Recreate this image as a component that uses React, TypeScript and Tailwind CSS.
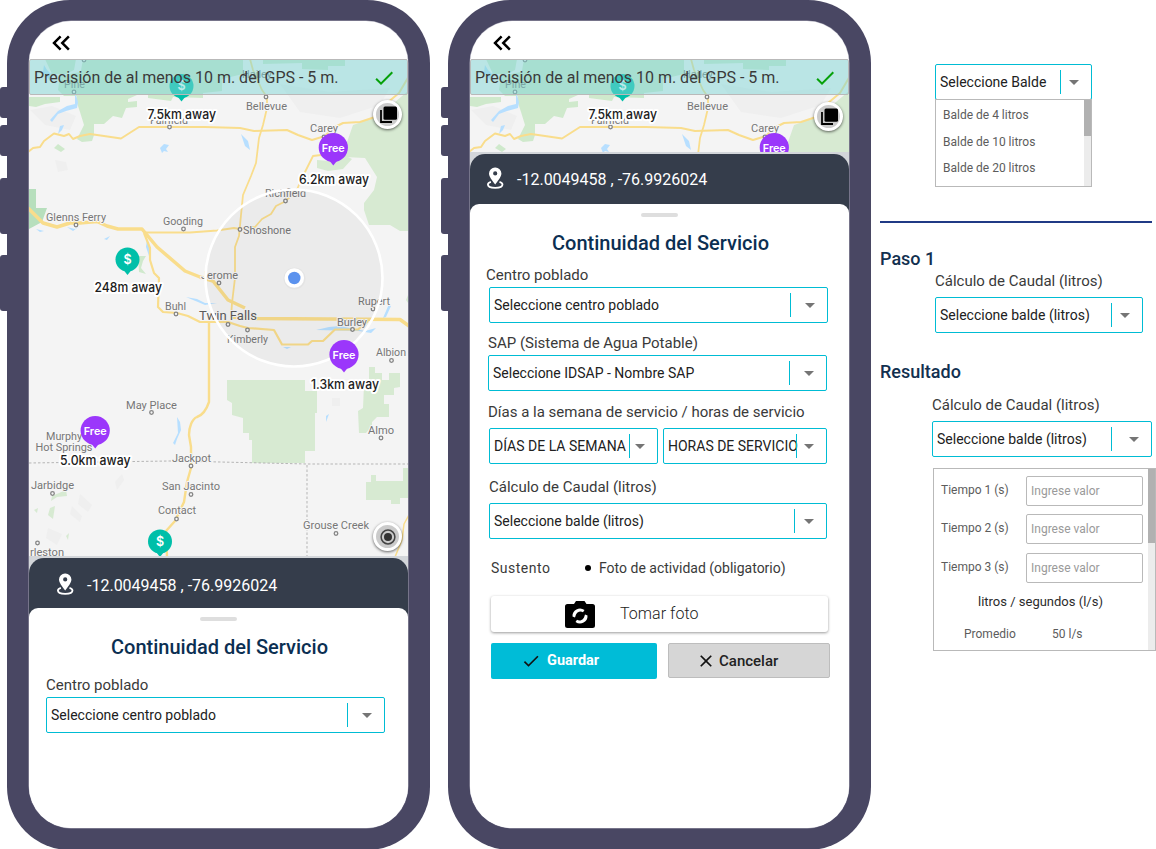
import React from "react";
import { MdKeyboardDoubleArrowLeft, MdCheck, MdClose } from "react-icons/md";

const towns: [string, number, number, number, number?][] = [
  ["Pine", 64, 88, 21],
  ["Hailey", 242, 78, 30],
  ["Bellevue", 246, 110, 41],
  ["Fairfield", 150, 124, 38],
  ["Carey", 310, 132, 28],
  ["Richfield", 265, 197, 41],
  ["Glenns Ferry", 46, 220.5, 60],
  ["Gooding", 163, 224.5, 40],
  ["Shoshone", 243, 234, 48],
  ["Jerome", 201, 278.5, 37],
  ["Buhl", 165, 310, 21],
  ["Twin Falls", 199, 319.5, 58, 13],
  ["Rupert", 358, 305, 32],
  ["Burley", 337, 325.5, 30],
  ["Kimberly", 227, 342.5, 41],
  ["Albion", 376, 356, 30],
  ["May Place", 126, 408.5, 51],
  ["Murphy", 46, 439.5, 36],
  ["Hot Springs", 35.5, 450.5, 57],
  ["Almo", 368, 433.5, 26],
  ["Jackpot", 172, 461.5, 39],
  ["Jarbidge", 31, 489, 43],
  ["San Jacinto", 162, 490, 58],
  ["Contact", 158, 514, 38],
  ["Grouse Creek", 303, 528.5, 66],
  ["rleston", 30, 555.5, 34],
];

const distances: [string, number, number, number][] = [
  ["7.5km away", 147.5, 118.5, 68.5],
  ["6.2km away", 299, 183.5, 70],
  ["248m away", 94.5, 291.5, 67.5],
  ["1.3km away", 311, 389, 68],
  ["5.0km away", 60, 465, 70.5],
];

const pins: [number, number, boolean][] = [
  [181.5, 86, false],
  [127.5, 259.5, false],
  [160, 541.5, false],
  [333.3, 147.5, true],
  [344, 354.5, true],
  [95.2, 430.5, true],
];

const dots: [number, number][] = [
  [84, 60], [74, 92], [266, 97], [169.5, 127], [324, 137], [285.5, 201], [76, 225], [183.5, 229], [240, 229.5],
  [219, 283], [176, 314], [228, 324.5], [373, 309], [352.5, 329.5], [247.5, 330], [391.5, 360.5],
  [151.5, 412.5], [381, 438], [191, 466], [52.5, 493.5], [191, 494.5], [176.5, 519], [336, 533.5], [37.5, 543],
];

const roads: [string, number][] = [
  ["M28 152L33 148L40 147L44 141L54 133.500L64 136L69 134L73 139L80 136L90 134L104 136L121 138.500L139 127H205L240 128L254 131L287 130L298 135L312 140L325 136L333 128L343 123L360 122L375 117L387 103L399 93L409 76", 2],
  ["M250 59L253 70L262 90L267 97V108L263 125L259 138L256 163L251 176L243 195L241 215L239 236L235 247V278L232 303L231 318", 1.8],
  ["M321 155L313 156L306 170L301 180L296 192L284 202L276 206L271 214L262 219L255 227L240 229", 1.8],
  ["M28 208L43 223L57 227L70 223L80 223L97 221.500L107 226L118 229H142L157 247L185 271L200 277L213 281L228 300L245 308", 3.5],
  ["M145 232.500H190L217 230.500L234 228L240 229", 2],
  ["M144 233L150 248V260L154 273L159 278L158 307L163 312L177 313L188 316L200 322H228L240 326L248 328L274 330L282 344.500H308L312 341L323 341L335 329.500H358L368 321", 2.2],
  ["M230 317L257 318.500L400 319.500L409 326", 3.5],
  ["M209 322V402C207 408 203 415 197 417C192 419 189 427 189 435L191 447L191 468L187 482L184 502L175 521L166 531L167 557", 2.4],
  ["M409 515L404 524L402 540L395 557", 1.5],
];

function Pin({ x, y, free }: { x: number; y: number; free: boolean }) {
  const r = free ? 14.6 : 12;
  return (
    <g>
      <circle cx={x} cy={y} r={r} fill={free ? "#9b37fb" : "#00bfa9"} />
      <path d={`M${x - 4} ${y + r - 1.5}L${x} ${y + r + 3.5}L${x + 4} ${y + r - 1.5}Z`} fill={free ? "#9b37fb" : "#00bfa9"} />
      <text x={x} y={y + 4} textAnchor="middle" fill="#fff" fontFamily="Inter, sans-serif" fontWeight="600" fontSize={free ? 10.8 : 12.5}>
        {free ? "Free" : "$"}
      </text>
    </g>
  );
}

function MapView({ height }: { height: number }) {
  const bottom = 59 + height;
  return (
    <svg className="block w-[379px]" height={height} viewBox={`29 59 379 ${height}`}>
      <rect x="29" y="59" width="379" height="498" fill="#f4f4f4" />
      <g fill="#efefef">
        <path d="M30 110L52 106L76 116L70 130L45 125Z" />
        <path d="M280 84L330 92L390 88L380 105L340 118L300 112Z" />
        <path d="M55 160L66 162L68 170L58 172Z" />
        <path d="M332 398H340V406H332Z" />
        <path d="M80 494L92 505L88 512L78 504ZM72 506L82 516L80 522L70 514ZM48 528L62 534L57 545L46 538ZM115 482L122 474L124 480L117 490Z" />
      </g>
      <g fill="#cfe9cc">
        <path d="M45 59H76L74 70L66 74H52Z" />
        <path d="M29 97H60V102L45 104L36 107L29 106Z" />
        <path d="M83 59H243V74L222 79V91L203 93V98L173 97L171 101L148 98V95H137L128 99V102L137 101V107L126 108L122 118L113 116L104 124H94V135L92 141L82 142L77 139L84 125L80 112L76 100Z" />
        <path d="M60 76L80 72L84 96H64L58 90Z" />
        <path d="M263 59H345V66L328 66V70L302 69V63L263 64Z" />
        <path d="M54 148L58 144L65 149L61 152Z" />
        <path d="M29 189H36V208H47L42 222L29 229Z" fill="#b7dfbd" />
        <path d="M138 256L146 256L143 261L141 268L146 274L139 272Z" />
      </g>
      <g fill="#d7ead2">
        <path d="M408 91L395 102L376 117L353 125L346 145L344 157L365 158L377 177L374 190L364 203V210L369 225H390L400 231H408Z" />
        <path d="M317 160L329 161L342 154L352 159L343 169L328 171L317 168Z" />
        <path d="M408 295V303L406 300Z" />
        <path d="M227 380H305V391H317V413H315V451H305V463H252V440H249V433H243V418L232 415V403L227 400Z" />
        <path d="M369 367H375V373H382V380H389V373H400V387L394 388V395H384V404H389V417H377L372 422V426L366 433H359L358 411L363 408L364 385L369 380Z" />
        <path d="M366 482H371V475H376V481H403V468H408V498H400V504H391V500H366Z" />
        <path d="M52 496L66 490L67 496L57 497L51 501ZM50 508L55 506L53 519L48 515ZM34 510L38 508L37 513ZM66 536L69 533L68 540Z" />
      </g>
      <g fill="#b7dfff">
        <path d="M75 92L78 102L77 108L66 111L58 114L52 122L50 120L58 111L67 106L75 104ZM60 126L64 125L62 130L58 134Z" />
        <path d="M44 65L47 70L51 74L53 70L50 81L43 72Z" />
        <path d="M160 148L164 144L169 145L166 149L168 152L164 151L162 153ZM241 134L248 141L250 150L245 146Z" />
        <path d="M36 229L44 231L40 232ZM67 227L75 229L80 226L73 231ZM104 239L110 236L107 240Z" />
        <path d="M177 417L180 422L181 430L177 439L175 445L173 443L178 433ZM326 416L329 414L326 422Z" />
        <path d="M186 297L197 299L205 303L217 303L205 305ZM316 330L329 327L340 326L365 331L376 328L371 333L359 331ZM283 347L291 347L287 349ZM389 304L391 306L386 317L383 318Z" />
        <path d="M147 239L150 250L149 256L146 247Z" />
      </g>
      <path d="M29 463L170 461L220 462L307 464L408 464M307 465V557" fill="none" stroke="#b5b5b5" strokeWidth="1" strokeDasharray="2.500 2" />
      <g fill="none" strokeLinejoin="round">
        {roads.map(([d, w]) => (
          <path key={d} d={d} stroke="#f9dd8c" strokeWidth={w} />
        ))}
      </g>
      <g fill="#f5f5f5" stroke="#858585" strokeWidth="1.300">
        {dots.map(([x, y]) => (
          <circle key={`${x}-${y}`} cx={x} cy={y} r="1.8" />
        ))}
      </g>
      <g fontFamily="Roboto, sans-serif" stroke="#f6f6f6" strokeWidth="2" strokeLinejoin="round" paintOrder="stroke">
        {towns
          .filter(([, , y]) => y < bottom)
          .map(([name, x, y, w, size]) => (
            <text
              key={name}
              x={x}
              y={y}
              textLength={w}
              lengthAdjust="spacingAndGlyphs"
              fontSize={size ?? 11.4}
              fill={size ? "#5c5c5c" : "#777"}
              stroke={y < 95 ? "none" : "#f6f6f6"}
            >
              {name}
            </text>
          ))}
      </g>
      <circle cx="294" cy="278" r="88.500" fill="#000" fillOpacity=".035" stroke="#fff" strokeWidth="2.600" />
      <circle cx="294.500" cy="278.500" r="11" fill="#e4e4e4" />
      <circle cx="294.300" cy="278" r="9.800" fill="#fff" />
      <circle cx="294.300" cy="278" r="6.200" fill="#5b92ee" />
      {pins
        .filter(([, y]) => y < bottom)
        .map(([x, y, free]) => (
          <Pin key={`${x}-${y}`} x={x} y={y} free={free} />
        ))}
      <g fontFamily="Inter, sans-serif" fontWeight="500" fontSize="13" fill="#1c1c1c" stroke="#fff" strokeWidth="4" strokeLinejoin="round" paintOrder="stroke">
        {distances
          .filter(([, , y]) => y < bottom)
          .map(([text, x, y, w]) => (
            <text key={text} x={x} y={y} textLength={w} lengthAdjust="spacingAndGlyphs">
              {text}
            </text>
          ))}
      </g>
    </svg>
  );
}

function PinBase() {
  return (
    <svg className="h-[22px] w-[17px] shrink-0" viewBox="0 0 17 22" fill="none">
      <path fillRule="evenodd" fill="#fff" d="M8.200 0.500A6 6 0 0 0 2 6.500C2 9.600 5.200 13.500 8.200 17.400C11.200 13.500 14.400 9.600 14.400 6.500A6 6 0 0 0 8.200 0.500ZM8.200 4.300A2.100 2.100 0 1 1 8.200 8.500A2.100 2.100 0 1 1 8.200 4.300Z" />
      <path stroke="#fff" strokeWidth="1.800" d="M3.900 14.800C2 15.400 0.900 16.400 0.900 17.500C0.900 19.500 4 20.800 8.200 20.800S15.500 19.500 15.500 17.500C15.500 16.400 14.400 15.400 12.500 14.800" />
    </svg>
  );
}

function Label({ className = "", children }: { className?: string; children: React.ReactNode }) {
  return <div className={`whitespace-nowrap text-[15px] leading-5 text-[#3a3a3a] ${className}`}>{children}</div>;
}

function Select({ text, className, tail = "w-[37px]" }: { text: string; className: string; tail?: string }) {
  return (
    <div className={`flex h-9 shrink-0 items-center rounded-[2px] border border-[#00bcd4] bg-white pl-1 ${className}`}>
      <span className="min-w-0 flex-1 whitespace-nowrap text-[14px] text-[#212121]">{text}</span>
      <span className={`flex h-6 shrink-0 items-center justify-end border-l border-[#00bcd4] pr-3 ${tail}`}>
        <svg className="h-[5px] w-[10px] shrink-0" viewBox="0 0 10 5">
          <path d="M0 0H10L5 5Z" fill="#757575" />
        </svg>
      </span>
    </div>
  );
}

function RoundButton({ className, children }: { className: string; children: React.ReactNode }) {
  return (
    <div className={`absolute flex size-[29px] items-center justify-center rounded-full border-[3.5px] border-white bg-[#cbcbcb] shadow-[0_1px_3px_rgba(0,0,0,0.6)] ${className}`}>
      {children}
    </div>
  );
}

interface PhoneProps {
  mapHeight: number;
  layersClass: string;
  barClass: string;
  locate?: boolean;
  children: React.ReactNode;
}

function Phone({ mapHeight, layersClass, barClass, locate = false, children }: PhoneProps) {
  return (
    <div className="relative h-[850px] w-[423px] shrink-0 rounded-[63px] bg-[#494763] px-[22px] pt-[21px]">
      <div className="absolute -left-[7px] top-[87px] flex w-[8px] flex-col">
        <div className="h-[31px] rounded-l-[3px] bg-[#494763]" />
        <div className="mt-[7px] h-[31px] rounded-l-[3px] bg-[#494763]" />
        <div className="mt-[22px] h-[56px] rounded-l-[3px] bg-[#494763]" />
        <div className="mt-[21px] h-[56px] rounded-l-[3px] bg-[#494763]" />
      </div>
      <div className="flex h-[807px] w-[379px] flex-col overflow-hidden rounded-[42px] bg-white shadow-[0_0_0_0.5px_#a3a2b2]">
        <div className="flex h-[38px] shrink-0 items-center pl-[17px] pt-[6px]">
          <MdKeyboardDoubleArrowLeft size={30} color="#000" className="shrink-0" />
        </div>
        <div className="relative shrink-0">
          <MapView height={mapHeight} />
          <div className="absolute inset-x-0 top-0 flex h-9 items-center justify-between rounded-[2px] border border-[#b9b9b9] bg-[#7fd6d6]/50 pl-1 pr-[11px] pt-px">
            <span className="whitespace-nowrap text-[16px] text-[#3a3a3a]">Precisión de al menos 10 m. del GPS - 5 m.</span>
            <MdCheck size={24} color="#07a10b" />
          </div>
          <RoundButton className={layersClass}>
            <svg className="ml-px h-[17px] w-[17px] shrink-0" viewBox="0 0 17 17">
              <path d="M1 4V16H12" fill="none" stroke="#000" strokeWidth="1.800" />
              <rect x="3.500" y="0.500" width="13.500" height="13.300" rx="1.500" />
            </svg>
          </RoundButton>
          {locate && (
            <RoundButton className="left-[344px] top-[463px]">
              <svg className="h-4 w-4 shrink-0" viewBox="0 0 16 16">
                <circle cx="8" cy="8" r="6.900" fill="none" stroke="#444" strokeWidth="1.500" />
                <circle cx="8" cy="8" r="4" fill="#333" />
              </svg>
            </RoundButton>
          )}
        </div>
        <div className="shrink-0 bg-[#d3d6da] pt-[2px]">
          <div className={`flex h-[60px] items-start rounded-t-[15px] bg-[#353d4b] ${barClass}`}>
            <PinBase />
            <span className="ml-[13px] whitespace-nowrap text-[16px] leading-[25px] text-white">-12.0049458 , -76.9926024</span>
          </div>
        </div>
        <div className="-mt-[10px] flex flex-1 flex-col rounded-t-[9px] bg-white">
          <div className="mx-auto mt-[9px] h-[4px] w-[37px] shrink-0 rounded-full bg-[#dedede]" />
          <h1 className="mt-[10px] pl-[2px] text-center text-[20px] font-medium leading-8 text-[#0b2f52]">Continuidad del Servicio</h1>
          {children}
        </div>
      </div>
    </div>
  );
}

function TimeRow({ label, className }: { label: string; className: string }) {
  return (
    <div className={`flex h-[30px] shrink-0 items-center pl-[7px] text-[12px] text-[#5c5c5c] ${className}`}>
      <span className="-mt-[2px] w-[85px]">{label}</span>
      <span className="flex h-[30px] w-[117px] items-center rounded-[2px] border border-[#b9b9b9] pl-1 text-[#9a9a9a]">Ingrese valor</span>
    </div>
  );
}

export default function App() {
  return (
    <div className="flex h-[849px] w-[1156px] overflow-hidden bg-white pl-[7px] font-[Roboto,sans-serif]">
      <Phone mapHeight={497} layersClass="left-[344px] top-[41px]" barClass="pl-[28px] pt-[15px]" locate>
        <div className="pl-[17px]">
          <Label className="mt-[12px]">Centro poblado</Label>
          <Select className="mt-[2px] w-[339px]" text="Seleccione centro poblado" />
        </div>
      </Phone>
      <div className="w-[18px] shrink-0" />
      <Phone mapHeight={93} layersClass="left-[344px] top-[43px]" barClass="pl-[17px] pt-[13px]">
        <div className="flex flex-col pl-[18px]">
          <Label className="-ml-[2px] mt-[6px]">Centro poblado</Label>
          <Select className="ml-[1px] mt-[2px] w-[339px]" text="Seleccione centro poblado" />
          <Label className="mt-[10px]">SAP (Sistema de Agua Potable)</Label>
          <Select className="mt-[2px] w-[339px]" text="Seleccione IDSAP - Nombre SAP" />
          <Label className="mt-[11px]">Días a la semana de servicio / horas de servicio</Label>
          <div className="ml-[1px] mt-[6px] flex gap-[5px]">
            <Select className="w-[169px]" text="DÍAS DE LA SEMANA" tail="w-[28px]" />
            <Select className="w-[164px]" text="HORAS DE SERVICIO" tail="w-[30px]" />
          </div>
          <Label className="ml-[1px] mt-[13px]">Cálculo de Caudal (litros)</Label>
          <Select className="ml-[1px] mt-[6px] w-[338px]" text="Seleccione balde (litros)" tail="w-[32px]" />
          <div className="ml-[3px] mt-[19px] flex h-5 items-center whitespace-nowrap text-[14px] text-[#3a3a3a]">
            <span className="w-[94px] tracking-[0.5px]">Sustento</span>
            <span className="size-[6px] rounded-full bg-black" />
            <span className="ml-2">Foto de actividad (obligatorio)</span>
          </div>
          <div className="ml-[3px] mt-[18px] flex h-[36px] w-[337px] items-center rounded-[3px] bg-white pl-[74px] shadow-[0_1px_3px_rgba(0,0,0,0.4)]">
            <svg className="h-[27px] w-[30px]" viewBox="0 0 30 27">
              <path d="M2.500 3H9L11 0H19.500L21.500 3H27.500A2.500 2.500 0 0 1 30 5.500V24.500A2.500 2.500 0 0 1 27.500 27H2.500A2.500 2.500 0 0 1 0 24.500V5.500A2.500 2.500 0 0 1 2.500 3Z" />
              <path d="M7.500 15.500A7.500 7.500 0 0 1 19.500 9L18 11.200A5 5 0 0 0 11 13.500L10 16.500Z" fill="#fff" />
              <path d="M22.500 14.500A7.500 7.500 0 0 1 10.500 21L12 18.800A5 5 0 0 0 19 16.500L20 13.500Z" fill="#fff" />
            </svg>
            <span className="ml-[25px] -mt-px text-[16px] font-light tracking-[0.05px] text-[#222]">Tomar foto</span>
          </div>
          <div className="ml-[3px] mt-[11px] flex gap-[11px] text-[15px] leading-5">
            <div className="flex h-9 w-[166px] items-center rounded-[2px] bg-[#00bcd7] pl-[30px] font-bold text-white">
              <MdCheck size={20} color="#111" />
              <span className="-mt-px ml-[6px] text-[14.5px]">Guardar</span>
            </div>
            <div className="flex h-[35px] w-[162px] items-center rounded-[2px] border border-[#bdbdbd] bg-[#d6d6d6] pl-[27px] font-medium text-[#222]">
              <MdClose size={20} color="#111" />
              <span className="ml-[3px]">Cancelar</span>
            </div>
          </div>
        </div>
      </Phone>
      <div className="flex w-[285px] shrink-0 flex-col pt-[64px]">
        <Select className="ml-[64px] w-[157px]" text="Seleccione Balde" tail="w-[31px]" />
        <div className="-mt-px ml-[64px] flex h-[88px] w-[157px] shrink-0 border border-[#b9b9b9] bg-white">
          <div className="flex-1 pl-[7px] pt-[6px] text-[12px] leading-[18px] text-[#5c5c5c]">
            <div>Balde de 4 litros</div>
            <div className="mt-[9px]">Balde de 10 litros</div>
            <div className="mt-[8px]">Balde de 20 litros</div>
          </div>
          <div className="w-[7px] bg-[#ececec]">
            <div className="h-[36px] bg-[#b1b1b1]" />
          </div>
        </div>
        <div className="ml-[9px] mt-[34px] h-[2px] w-[272px] shrink-0 bg-[#203a85]" />
        <h2 className="ml-[9px] mt-[24px] text-[18px] font-medium leading-6 text-[#12304f]">Paso 1</h2>
        <Label className="ml-[64px]">Cálculo de Caudal (litros)</Label>
        <Select className="ml-[64px] mt-[6px] w-[208px]" text="Seleccione balde (litros)" tail="w-[31px]" />
        <h2 className="ml-[9px] mt-[27px] text-[18px] font-medium leading-6 text-[#12304f]">Resultado</h2>
        <Label className="ml-[61px] mt-[11px]">Cálculo de Caudal (litros)</Label>
        <Select className="ml-[61px] mt-[6px] w-[220px]" text="Seleccione balde (litros)" tail="w-[40px]" />
        <div className="ml-[62px] mt-[11px] flex h-[183px] w-[223px] shrink-0 border border-[#b9b9b9] bg-white">
          <div className="flex flex-1 flex-col">
            <TimeRow className="mt-[7px]" label="Tiempo 1 (s)" />
            <TimeRow className="mt-[8px]" label="Tiempo 2 (s)" />
            <TimeRow className="mt-[9px]" label="Tiempo 3 (s)" />
            <div className="ml-[44px] mt-[10px] text-[13px] leading-[18px] text-[#2b2b2b]">litros / segundos (l/s)</div>
            <div className="ml-[30px] mt-[14px] flex text-[12px] leading-[18px] text-[#5c5c5c]">
              <span className="w-[88px]">Promedio</span>
              <span>50 l/s</span>
            </div>
          </div>
          <div className="w-[7px] bg-[#ececec]">
            <div className="h-[74px] bg-[#b1b1b1]" />
          </div>
        </div>
      </div>
    </div>
  );
}
